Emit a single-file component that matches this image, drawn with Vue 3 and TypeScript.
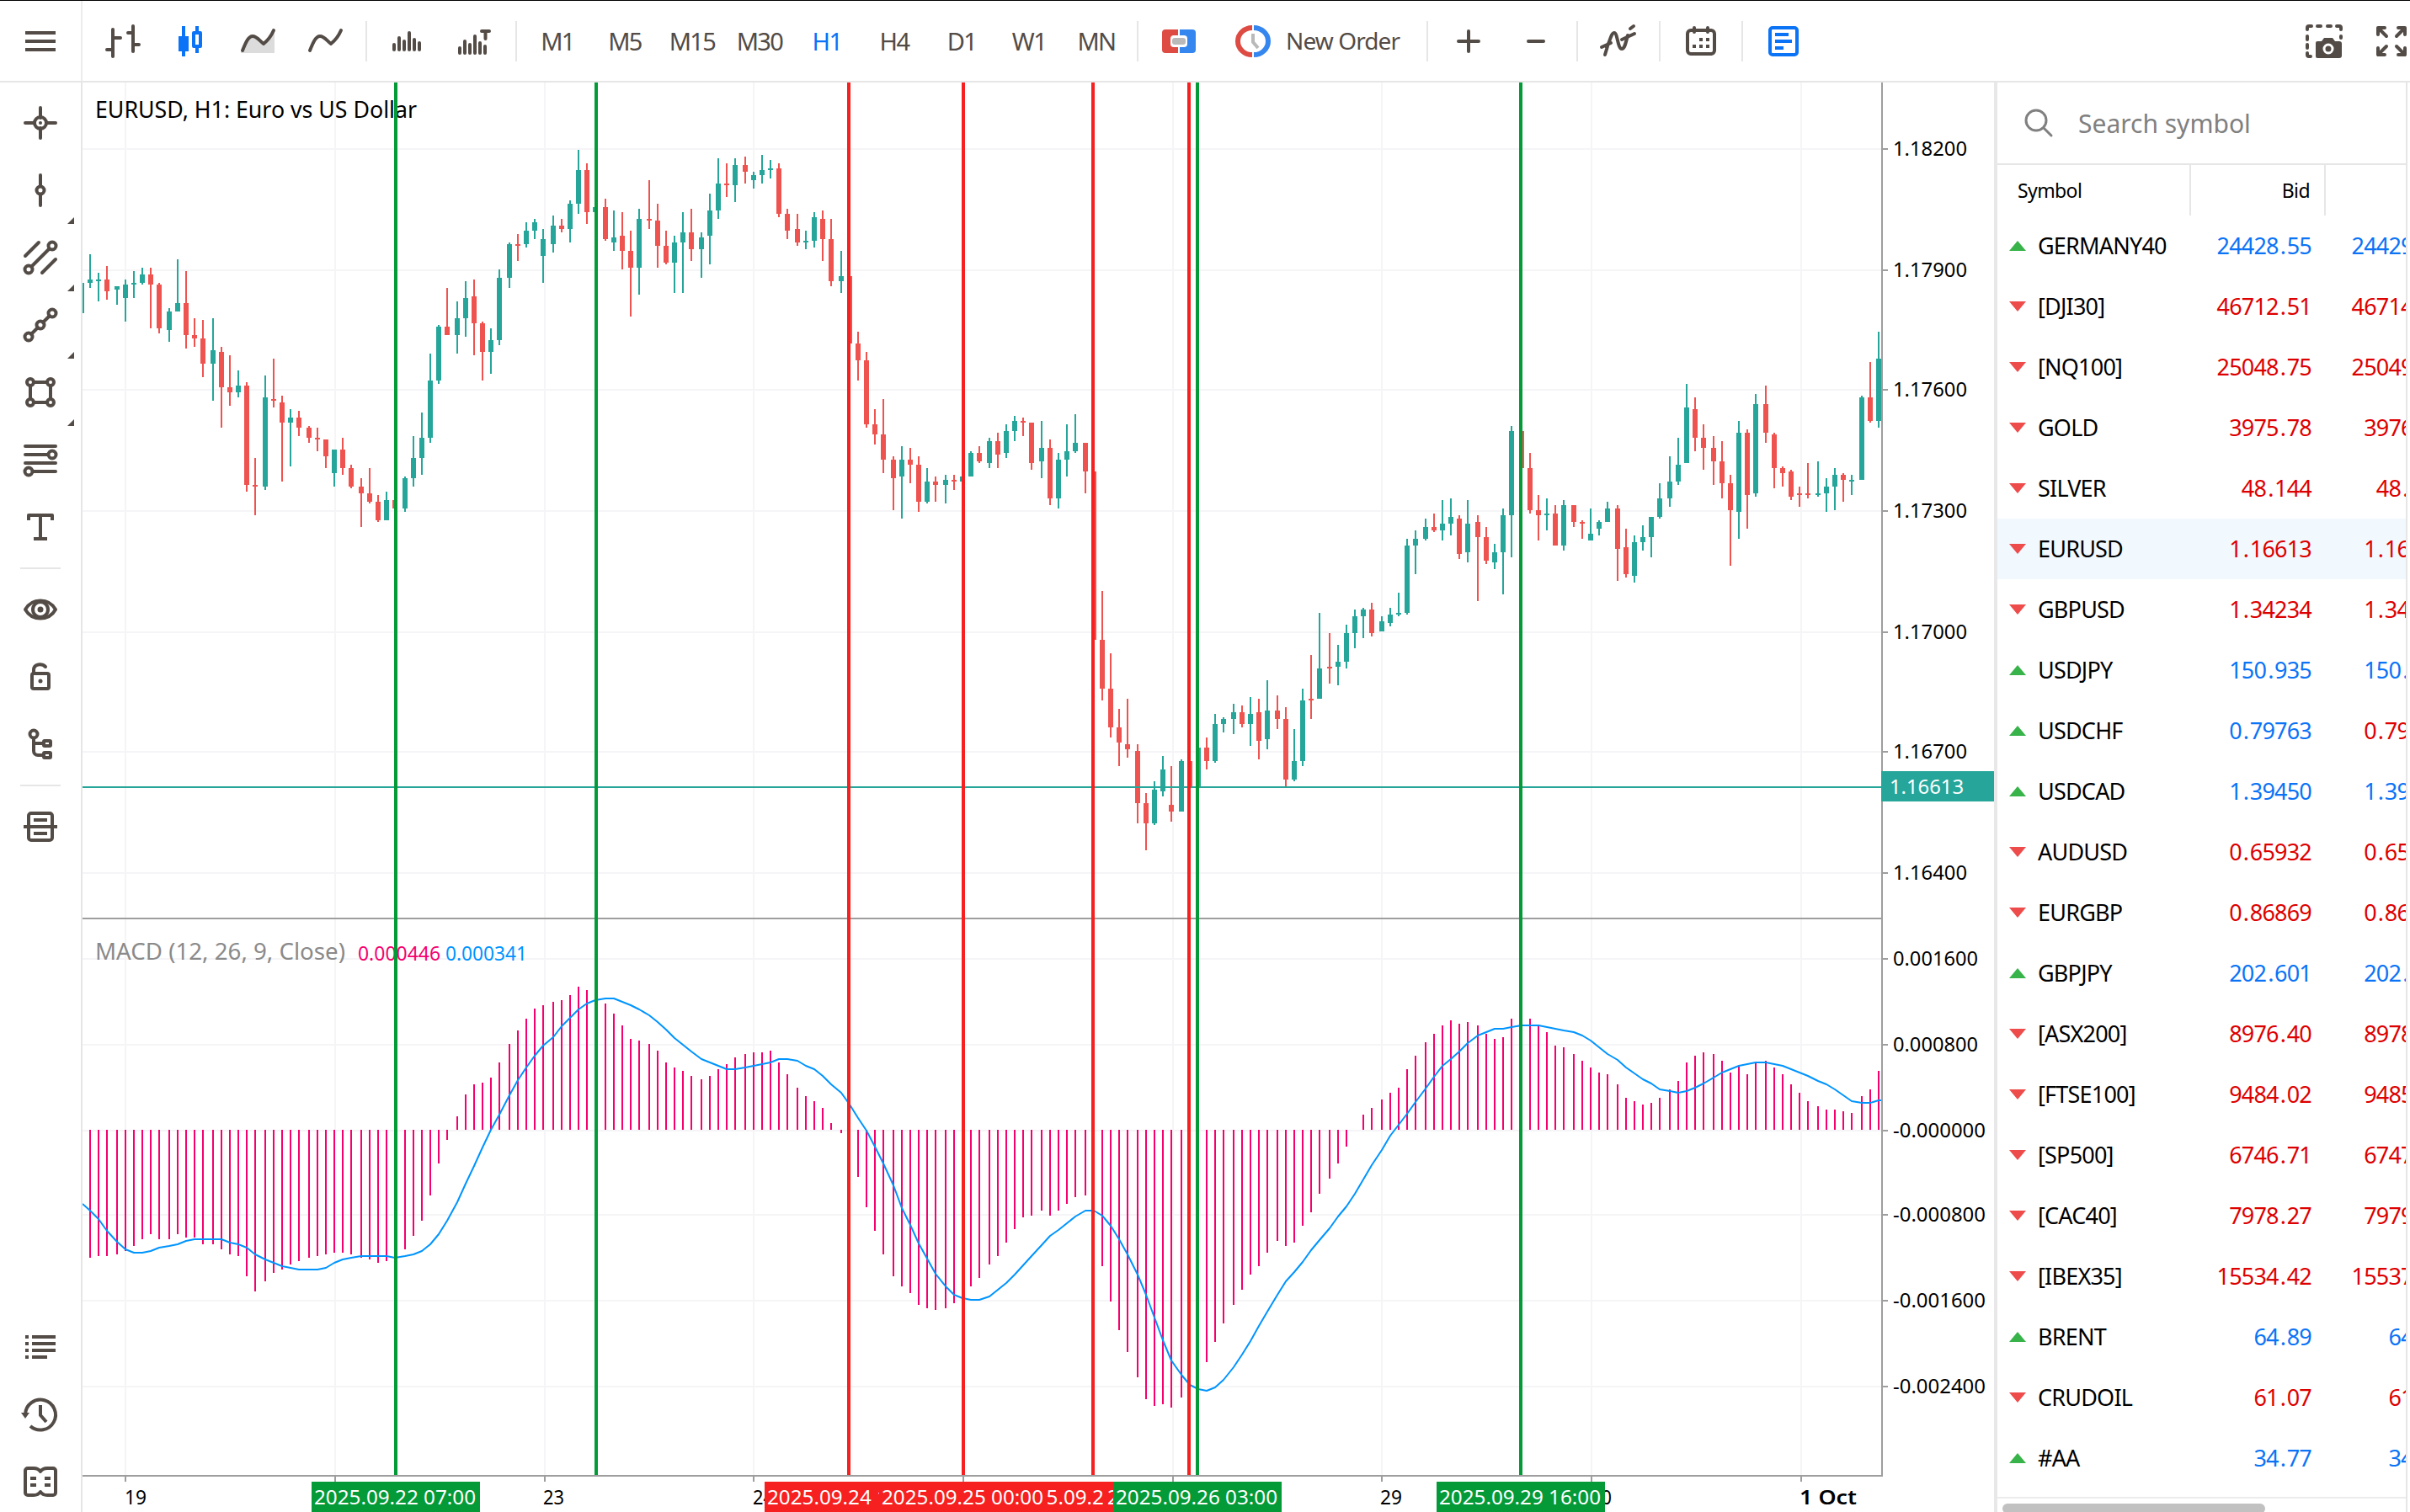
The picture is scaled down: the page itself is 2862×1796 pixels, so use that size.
<script setup lang="ts">
type Candle = [number, number, number, number, number]
type Dir = 'up' | 'down'
interface Quote { name: string; dir: Dir; bid: string; ask: string; bidUp: boolean; askUp: boolean; active?: boolean }

const icons: Record<string, string> = {
  menu: '<path d="M6 14h36M6 24h36M6 34h36" stroke-linecap="butt"/>',
  bars: '<path d="M12 10v32M5 34h7M12 20h9M36 6v30M30 14h6M36 28h7"/>',
  candles: '<path d="M16 6v36M32 6v6M32 32v6" stroke-linecap="butt"/><path d="M10 18h12v18H10z" fill="currentColor" stroke="none"/><path d="M28 14h8v16h-8z"/>',
  area: '<path d="M4 38V36C9 25 12 18 18 18s8 5 14 9c5-5 8-9 12-17v28z" fill="#dcdcdc" stroke="none"/><path d="M6 35C10 25 13 18 18 18s8 5 13 9c5-4 9-9 12-16"/>',
  line: '<path d="M6 35C10 25 13 18 18 18s8 5 13 9c5-4 9-9 12-16"/>',
  volume: '<path d="M8 28v6M14 20v14M20 24v10M26 14v20M32 22v12M38 26v8"/>',
  tick: '<path d="M6 32v6M12 24v14M18 28v10M24 18v20M30 26v12M36 30v8M32 12h9M36.500 12v9"/>',
  oneclick: '<g stroke="none"><path d="M23 10H8a4 4 0 0 0-4 4v20a4 4 0 0 0 4 4h15z" fill="#dd4b43"/><path d="M25 10h15a4 4 0 0 1 4 4v20a4 4 0 0 1-4 4H25z" fill="#3586ee"/><rect x="14" y="17" width="20" height="14" rx="4" fill="#fff"/><rect x="16" y="20" width="16" height="8" rx="3" fill="#b9b9b9"/></g>',
  order: '<g stroke-linecap="butt"><path d="M23 8a17 16 0 0 0 0 32" stroke="#dd4b43" stroke-width="6"/><path d="M25 8a17 16 0 0 1 0 32" stroke="#3586ee" stroke-width="6"/><path d="M24 15v10l6 7" stroke="#b9b9b9"/></g>',
  plus: '<path d="M24 12v24M12 24h24"/>',
  minus: '<path d="M15 24h18"/>',
  indicators: '<path d="M8 40l3-10M10 31c4-6 5-17 9-17s4 19 9 19c3 0 4-4 7-16M38 9l4-3"/><path d="M4 31l11-5M28 22l15-7"/>',
  calendar: '<rect x="8" y="11" width="32" height="28" rx="4"/><path d="M16 8v5M32 8v5" /><g stroke="none" fill="currentColor"><path d="M22 20h4v4h-4zM30 20h4v4h-4zM14 28h4v4h-4zM22 28h4v4h-4zM30 28h4v4h-4z"/></g>',
  doc: '<rect x="8" y="8" width="32" height="32" rx="3"/><path d="M14 16h16M14 24h20M14 32h10" stroke-linecap="butt"/>',
  camera: '<path d="M4 10V8a2 2 0 0 1 2-2h3M16 6h4M28 6h4M39 6h3a2 2 0 0 1 2 2v2M44 18v2M4 18v4M4 28v4M4 38v2a2 2 0 0 0 2 2h2"/><path fill="currentColor" stroke="none" d="M16 24h5l3-4h10l3 4h5a3 3 0 0 1 3 3v14a3 3 0 0 1-3 3H16a2 2 0 0 1-2-2V26a2 2 0 0 1 2-2z"/><circle cx="29" cy="33" r="5" stroke="#fff" stroke-width="3"/>',
  fullscreen: '<path d="M8 16V8h8M8 8l10 10M32 8h8v8M40 8L30 18M8 32v8h8M8 40l10-10M32 40h8v-8M40 40L30 30"/>',
  cross: '<path d="M24 6v12M24 30v12M6 24h11M31 24h11"/><circle cx="24" cy="24" r="7"/><circle cx="24" cy="24" r="2" fill="currentColor" stroke="none"/>',
  vline: '<path d="M24 6v13M24 29v13"/><circle cx="24" cy="24" r="4.500"/>',
  channel: '<path d="M6 22L22 6M14 34l20-20M26 42l16-16"/><circle cx="38" cy="10" r="4.500"/><circle cx="10" cy="38" r="4.500"/>',
  trend: '<path d="M13 35l8-8M27 21l8-8"/><circle cx="38" cy="10" r="4.500"/><circle cx="24" cy="24" r="4.500"/><circle cx="10" cy="38" r="4.500"/>',
  shape: '<path d="M17 12h14M17 36h14M12 17v14M36 17v14"/><circle cx="12" cy="12" r="4"/><circle cx="36" cy="12" r="4"/><circle cx="12" cy="36" r="4"/><circle cx="36" cy="36" r="4"/>',
  fibo: '<path d="M6 8h36M6 18h27M6 28h36M15 38h27"/><circle cx="38" cy="18" r="4.500"/><circle cx="10" cy="38" r="4.500"/>',
  text: '<path d="M10 16v-6h28v6M24 10v28M16 38h16" stroke-linecap="butt"/>',
  eye: '<path d="M6 24C14 10 34 10 42 24 34 38 14 38 6 24z"/><circle cx="24" cy="24" r="9"/><circle cx="24" cy="24" r="3.500" fill="currentColor" stroke="none"/>',
  lock: '<rect x="14" y="20" width="20" height="18" rx="2"/><path d="M16 20v-4c0-8 10-8 14-4"/><circle cx="24" cy="29" r="2.500" fill="currentColor" stroke="none"/>',
  tree: '<circle cx="16" cy="12" r="4.500"/><path d="M16 17v15a5 5 0 0 0 5 5h7M16 23h12"/><rect x="28" y="20" width="8" height="6" rx="1"/><rect x="28" y="34" width="8" height="6" rx="1"/>',
  objects: '<rect x="10" y="8" width="28" height="32" rx="3"/><path d="M4 24h40M16 16h16M16 32h16" stroke-linecap="butt"/>',
  list: '<path d="M6 12h4M14 12h28M6 20h4M14 20h28M6 28h4M14 28h28M6 36h4M14 36h18" stroke-linecap="butt"/>',
  history: '<path d="M6 24a18 18 0 1 1 6 14" stroke-linecap="butt"/><path d="M1 22h10l-5 7z" fill="currentColor" stroke="none"/><path d="M24 13v12l7 8" stroke-linecap="butt"/>',
  book: '<path d="M24 12c-2-3-4-4-8-4H9a3 3 0 0 0-3 3v26a3 3 0 0 0 3 3h7c4 0 6-1 8-4 2 3 4 4 8 4h7a3 3 0 0 0 3-3V11a3 3 0 0 0-3-3h-7c-4 0-6 1-8 4z"/><path d="M12 20h7M29 20h7M12 28h7M29 28h7" stroke-linecap="butt"/>',
  search: '<circle cx="21" cy="21" r="12"/><path d="M30 30l9 9"/>',
}

const frames = ['M1', 'M5', 'M15', 'M30', 'H1', 'H4', 'D1', 'W1', 'MN']
const drawTools = ['cross', 'vline', 'channel', 'trend', 'shape', 'fibo', 'text']
const expandable = ['vline', 'channel', 'trend', 'shape']

// high, body top, body bottom, low, rising
const candles: Candle[] = [
  [302,332,336,342,1],[324,332,334,358,1],[316,332,346,356,0],[340,340,344,362,1],[332,338,354,382,1],[322,336,338,354,1],[318,326,336,338,1],[318,326,338,390,0],[336,338,390,396,0],[366,370,392,406,1],
  [308,360,370,370,1],[322,360,398,414,0],[378,398,402,412,0],[380,402,432,448,0],[378,416,432,476,1],[412,418,460,508,0],[422,460,466,482,0],[440,458,466,472,1],[454,458,576,584,0],[544,576,578,612,0],
  [446,472,578,582,1],[426,474,476,484,0],[470,478,502,572,0],[486,496,502,554,1],[488,496,508,518,0],[506,508,520,526,0],[508,520,522,536,0],[522,522,542,556,0],[534,534,562,578,1],[520,534,556,564,0],
  [552,556,578,580,0],[568,578,586,626,0],[556,586,596,598,0],[588,596,618,620,0],[584,594,618,618,1],[594,594,604,604,0],[566,568,604,608,1],[518,544,568,578,1],[490,520,544,564,1],[420,452,520,526,1],
  [386,388,452,456,1],[342,388,398,398,0],[358,378,398,420,1],[334,354,378,400,1],[332,352,384,422,0],[382,384,418,452,0],[390,404,418,444,1],[320,330,404,410,1],[288,290,330,342,1],[278,290,292,310,0],
  [264,274,290,294,1],[260,264,274,284,1],[272,284,304,336,1],[256,268,290,300,1],[260,268,272,276,0],[238,242,272,288,1],[178,202,242,254,1],[194,202,252,266,0],[246,246,252,252,1],[236,246,284,286,0],
  [250,282,288,298,1],[252,280,298,320,0],[274,298,318,376,0],[248,260,318,350,1],[214,260,262,272,0],[242,262,292,318,0],[274,292,312,314,0],[280,288,312,348,1],[252,276,288,348,1],[248,276,296,310,0],
  [276,282,296,330,1],[230,250,280,314,1],[188,218,250,260,1],[194,218,220,234,0],[188,196,220,240,1],[186,196,204,218,0],[204,208,214,224,1],[184,202,208,218,1],[190,200,202,212,1],[194,200,254,258,0],
  [248,254,274,284,0],[254,272,288,292,0],[274,286,288,296,1],[252,258,286,294,1],[250,260,284,310,0],[260,284,334,340,0],[298,328,334,348,1],[328,328,408,408,0],[394,408,428,452,0],[418,428,504,508,0],
  [486,504,516,528,0],[474,516,546,562,0],[542,546,568,606,0],[530,546,566,616,1],[532,546,552,574,0],[542,552,596,608,0],[556,572,596,598,1],[566,572,576,596,0],[564,570,576,598,1],[564,570,572,582,0],
  [566,566,572,572,1],[536,538,566,566,1],[530,538,548,550,0],[520,524,550,556,1],[514,524,540,556,0],[504,512,538,544,1],[494,500,512,524,1],[496,500,502,518,0],[502,502,550,558,0],[500,532,548,568,1],
  [522,532,592,600,0],[538,546,592,604,1],[504,536,546,566,1],[492,526,536,538,1],[526,526,560,586,0],[560,560,760,760,0],[702,760,818,832,0],[776,818,864,876,0],[842,864,882,910,0],[830,884,890,900,0],
  [884,892,954,978,0],[942,954,978,1010,0],[928,938,978,980,1],[898,914,940,946,1],[910,956,964,976,0],[902,904,964,964,1],[904,904,936,936,0],[888,888,936,936,1],[876,888,904,914,0],[848,860,904,906,1],
  [852,854,860,870,1],[836,846,854,872,1],[838,846,860,864,0],[828,848,860,886,1],[830,846,880,902,0],[808,844,878,890,1],[826,844,854,866,0],[840,854,926,934,0],[866,904,926,928,1],[818,832,904,910,1],
  [778,830,832,854,0],[728,794,830,830,1],[752,792,794,812,0],[766,786,792,814,1],[742,752,786,794,1],[724,732,752,770,1],[722,724,732,758,1],[716,724,752,756,0],[732,738,750,750,1],[722,730,740,744,1],
  [704,728,730,732,1],[640,648,728,730,1],[630,640,648,682,1],[616,626,640,642,1],[610,626,630,632,0],[594,622,630,642,1],[592,614,622,636,1],[612,616,658,664,0],[594,622,656,668,1],[612,620,638,714,0],
  [626,638,666,670,0],[646,656,668,676,1],[604,612,656,706,1],[506,512,612,662,1],[512,512,556,556,0],[538,556,606,610,0],[588,606,612,642,0],[592,610,612,630,1],[600,610,648,648,0],[594,600,648,654,1],
  [600,600,620,626,0],[618,620,622,640,0],[604,634,642,642,1],[618,620,628,636,1],[596,604,620,620,1],[600,604,652,690,0],[628,650,682,686,0],[636,644,684,692,1],[624,638,644,654,1],[614,614,638,662,1],
  [574,592,614,616,1],[542,572,592,602,1],[520,552,572,576,1],[456,484,550,550,1],[472,486,520,536,0],[504,520,532,558,0],[518,532,548,576,0],[524,548,574,592,0],[564,574,606,672,0],[500,514,608,640,1],
  [510,514,588,628,0],[468,480,586,590,1],[458,480,514,526,0],[514,516,556,580,0],[554,556,562,578,0],[558,560,590,594,0],[578,586,588,602,0],[550,586,588,592,0],[548,586,588,590,1],[568,578,586,608,1],
  [556,564,578,606,1],[562,564,570,596,0],[564,570,572,588,1],[470,472,570,570,1],[430,472,500,502,0],[394,426,500,508,1],
]

const ZERO = 1342
const macd = [
  1494,1492,1492,1490,1486,1480,1472,1466,1472,1472,1466,1470,1470,1478,1478,1484,1490,1492,1516,1534,
  1522,1512,1508,1502,1498,1494,1492,1490,1488,1488,1490,1494,1496,1500,1498,1492,1484,1468,1450,1420,
  1382,1354,1326,1300,1288,1286,1280,1262,1240,1224,1210,1198,1194,1190,1188,1182,1172,1176,1184,1192,
  1204,1218,1234,1236,1240,1248,1262,1268,1272,1278,1282,1278,1270,1264,1256,1252,1250,1250,1248,1262,
  1276,1292,1302,1308,1316,1334,1346,1370,1398,1434,1462,1490,1516,1528,1536,1550,1554,1556,1554,1548,
  1540,1528,1518,1502,1492,1476,1460,1446,1444,1438,1444,1438,1430,1422,1420,1460,1504,1546,1580,1606,
  1636,1662,1670,1668,1672,1660,1650,1635,1618,1594,1572,1550,1532,1514,1504,1488,1474,1480,1476,1456,
  1440,1418,1400,1382,1362,1342,1324,1316,1306,1298,1292,1270,1254,1238,1228,1218,1212,1216,1214,1218,
  1228,1234,1232,1210,1210,1210,1218,1226,1242,1244,1252,1260,1268,1274,1276,1288,1304,1308,1312,1310,
  1304,1294,1284,1262,1254,1250,1252,1260,1274,1266,1276,1262,1260,1268,1276,1288,1298,1308,1314,1318,
  1318,1320,1322,1302,1294,1272,
]
const signal = [
  1438,1448,1462,1475,1484,1488,1488,1486,1482,1480,1478,1474,1472,1472,1472,1472,1476,1478,1482,1490,
  1496,1500,1504,1506,1508,1508,1508,1506,1500,1496,1494,1492,1492,1492,1492,1494,1492,1490,1486,1478,
  1466,1450,1428,1406,1385,1363,1342,1324,1301,1283,1268,1254,1242,1232,1219,1209,1199,1192,1188,1186,
  1186,1190,1194,1199,1206,1214,1223,1233,1241,1249,1258,1262,1266,1270,1270,1268,1266,1264,1262,1258,
  1258,1260,1266,1270,1278,1288,1298,1312,1328,1343,1362,1382,1408,1435,1455,1477,1495,1513,1528,1538,
  1542,1544,1544,1540,1532,1524,1514,1503,1492,1479,1468,1461,1453,1445,1438,1438,1444,1456,1472,1490,
  1514,1538,1565,1592,1616,1633,1645,1650,1652,1648,1639,1624,1609,1593,1575,1558,1538,1522,1511,1499,
  1485,1473,1459,1445,1433,1418,1401,1384,1366,1349,1336,1323,1309,1293,1279,1266,1258,1249,1239,1230,
  1226,1222,1222,1220,1218,1218,1218,1220,1222,1224,1226,1230,1236,1244,1252,1259,1268,1275,1282,1287,
  1294,1296,1298,1296,1292,1287,1280,1274,1270,1266,1264,1262,1262,1264,1266,1270,1274,1278,1284,1288,
  1294,1301,1308,1310,1310,1307,
]

// bars sit on a 10px pitch, with a 2px correction each time the fraction rolls over
const barX = (i: number): number => 107 + 10 * i + 2 * Math.floor(i * 0.18 + 0.53)

function candlePath(rising: number): string {
  return candles
    .map((c, i) => {
      if (c[4] !== rising) return ''
      const x = barX(i)
      return `M${x - 1} ${c[0]}h2V${c[3]}h-2zM${x - 3} ${c[1]}h6V${c[2]}h-6z`
    })
    .join('')
}
const upPath = candlePath(1) + 'M94 336h6V372h-6z'
const downPath = candlePath(0)
const macdPath = macd.map((y, i) => (y === ZERO ? '' : `M${barX(i)} ${ZERO}V${y}`)).join('')
const signalPath = 'M98 1430' + signal.map((y, i) => `L${barX(i)} ${y}`).join('') + 'L2234 1307'

const gridX = [149, 398, 647, 895, 1144, 1393, 1641, 1890, 2139]
const prices = [
  { y: 177, t: '1.18200' }, { y: 321, t: '1.17900' }, { y: 463, t: '1.17600' }, { y: 607, t: '1.17300' },
  { y: 751, t: '1.17000' }, { y: 893, t: '1.16700' }, { y: 1037, t: '1.16400' },
]
const levels = [
  { y: 1139, t: '0.001600' }, { y: 1241, t: '0.000800' }, { y: 1343, t: '-0.000000' },
  { y: 1443, t: '-0.000800' }, { y: 1545, t: '-0.001600' }, { y: 1647, t: '-0.002400' },
]
const days = [
  { x: 148, t: '19', w: 26 }, { x: 645, t: '23', w: 25 }, { x: 894, t: '24', w: 25 },
  { x: 1639, t: '29', w: 26 }, { x: 1889, t: '30', w: 25 },
]
const GREEN = '#049a38'
const RED = '#f5201f'
const markers = [
  { x: 470, c: GREEN, t: '2025.09.22 07:00' }, { x: 708, c: GREEN, t: '' }, { x: 1008, c: RED, t: '2025.09.24 11:00' },
  { x: 1144, c: RED, t: '2025.09.25 00:00' }, { x: 1298, c: RED, t: '2025.09.25 15:00' }, { x: 1412, c: RED, t: '2025.09.26 02:00' },
  { x: 1422, c: GREEN, t: '2025.09.26 03:00' }, { x: 1806, c: GREEN, t: '2025.09.29 16:00' },
]
// paint order of the date tags: earlier entries end up underneath
const tags = [2, 4, 3, 5, 6, 0, 7].map((i) => markers[i])

const q = (name: string, dir: Dir, bid: string, ask: string, bidUp = dir === 'up', askUp = bidUp): Quote => ({ name, dir, bid, ask, bidUp, askUp, active: name === 'EURUSD' })
const quotes: Quote[] = [
  q('GERMANY40', 'up', '24428.55', '24429.55'), q('[DJI30]', 'down', '46712.51', '46714.51'), q('[NQ100]', 'down', '25048.75', '25049.75'),
  q('GOLD', 'down', '3975.78', '3976.03'), q('SILVER', 'down', '48.144', '48.174'), q('EURUSD', 'down', '1.16613', '1.16619'),
  q('GBPUSD', 'down', '1.34234', '1.34243'), q('USDJPY', 'up', '150.935', '150.944'), q('USDCHF', 'up', '0.79763', '0.79774', true, false),
  q('USDCAD', 'up', '1.39450', '1.39460'), q('AUDUSD', 'down', '0.65932', '0.65940'), q('EURGBP', 'down', '0.86869', '0.86879'),
  q('GBPJPY', 'up', '202.601', '202.622'), q('[ASX200]', 'down', '8976.40', '8978.40'), q('[FTSE100]', 'down', '9484.02', '9485.02'),
  q('[SP500]', 'down', '6746.71', '6747.31'), q('[CAC40]', 'down', '7978.27', '7979.27'), q('[IBEX35]', 'down', '15534.42', '15537.42'),
  q('BRENT', 'up', '64.89', '64.92'), q('CRUDOIL', 'down', '61.07', '61.10'), q('#AA', 'up', '34.77', '34.80'),
]
const whole = (v: string): string => v.split('.')[0]
const frac = (v: string): string => v.split('.')[1]
</script>

<template>
  <div class="app">
    <header class="topbar">
      <div class="menu"><svg class="ico" viewBox="0 0 48 48" v-html="icons.menu" /></div>
      <div class="tools">
        <div class="cell"><svg class="ico" viewBox="0 0 48 48" v-html="icons.bars" /></div>
        <div class="cell on"><svg class="ico" viewBox="0 0 48 48" v-html="icons.candles" /></div>
        <div class="cell"><svg class="ico" viewBox="0 0 48 48" v-html="icons.area" /></div>
        <div class="cell"><svg class="ico" viewBox="0 0 48 48" v-html="icons.line" /></div>
        <i class="sep" />
        <div class="cell"><svg class="ico" viewBox="0 0 48 48" v-html="icons.volume" /></div>
        <div class="cell"><svg class="ico" viewBox="0 0 48 48" v-html="icons.tick" /></div>
        <i class="sep" />
        <div v-for="f in frames" :key="f" class="cell frame" :class="{ on: f === 'H1' }">{{ f }}</div>
        <i class="sep" />
        <div class="cell"><svg class="ico" viewBox="0 0 48 48" v-html="icons.oneclick" /></div>
        <div class="cell order"><svg class="ico" viewBox="0 0 48 48" v-html="icons.order" /><span>New Order</span></div>
        <i class="sep" />
        <div class="cell"><svg class="ico" viewBox="0 0 48 48" v-html="icons.plus" /></div>
        <div class="cell"><svg class="ico" viewBox="0 0 48 48" v-html="icons.minus" /></div>
        <i class="sep" />
        <div class="cell"><svg class="ico" viewBox="0 0 48 48" v-html="icons.indicators" /></div>
        <i class="sep" />
        <div class="cell"><svg class="ico" viewBox="0 0 48 48" v-html="icons.calendar" /></div>
        <i class="sep" />
        <div class="cell on"><svg class="ico" viewBox="0 0 48 48" v-html="icons.doc" /></div>
      </div>
      <div class="right">
        <div class="cell"><svg class="ico" viewBox="0 0 48 48" v-html="icons.camera" /></div>
        <div class="cell"><svg class="ico" viewBox="0 0 48 48" v-html="icons.fullscreen" /></div>
      </div>
    </header>

    <div class="body">
      <aside class="side">
        <div v-for="t in drawTools" :key="t" class="scell">
          <svg class="ico" viewBox="0 0 48 48" v-html="icons[t]" />
          <b v-if="expandable.includes(t)" class="more" />
        </div>
        <i class="hsep" />
        <div v-for="t in ['eye', 'lock', 'tree']" :key="t" class="scell"><svg class="ico" viewBox="0 0 48 48" v-html="icons[t]" /></div>
        <i class="hsep" />
        <div class="scell"><svg class="ico" viewBox="0 0 48 48" v-html="icons.objects" /></div>
        <div class="bottom">
          <div v-for="t in ['list', 'history', 'book']" :key="t" class="scell"><svg class="ico" viewBox="0 0 48 48" v-html="icons[t]" /></div>
        </div>
      </aside>

      <svg class="chart" viewBox="98 98 2270 1698" width="2270" height="1698">
        <clipPath id="plot"><rect x="98" y="98" width="2136" height="1656" /></clipPath>
        <g clip-path="url(#plot)">
          <g fill="#f5f5f7">
            <rect v-for="x in gridX" :key="x" :x="x - 1" y="98" width="2" height="1654" />
            <rect v-for="p in [...prices, ...levels]" :key="p.t" x="98" :y="p.y - 1" width="2136" height="2" />
          </g>
          <path :d="upPath" fill="#26a69a" />
          <path :d="downPath" fill="#ef5350" />
          <path :d="macdPath" stroke="#f5006e" stroke-width="2" fill="none" />
          <path :d="signalPath" stroke="#0094ff" stroke-width="2" fill="none" stroke-linejoin="round" />
        </g>
        <text x="113" y="140" font-size="27" textLength="382" lengthAdjust="spacingAndGlyphs">EURUSD, H1: Euro vs US Dollar</text>
        <text x="113" y="1140" font-size="28" textLength="297" lengthAdjust="spacingAndGlyphs" fill="#8a8a8a">MACD (12, 26, 9, Close)</text>
        <text x="425" y="1141" font-size="24" textLength="98" lengthAdjust="spacingAndGlyphs" fill="#f5006e">0.000446</text>
        <text x="529" y="1141" font-size="24" textLength="97" lengthAdjust="spacingAndGlyphs" fill="#0094ff">0.000341</text>
        <rect x="98" y="1090" width="2136" height="2" fill="#9e9e9e" />
        <rect x="98" y="1752" width="2138" height="2" fill="#9e9e9e" />
        <rect x="2234" y="98" width="2" height="1656" fill="#9e9e9e" />
        <rect x="98" y="934" width="2136" height="2" fill="#26a69a" />
        <rect v-for="m in markers" :key="m.x" :x="m.x - 2" y="98" width="4" height="1654" :fill="m.c" />
        <g v-for="p in prices" :key="p.t">
          <rect x="2236" :y="p.y - 1" width="6" height="2" fill="#9e9e9e" />
          <text x="2248" :y="p.y + 8" font-size="24" textLength="88" lengthAdjust="spacingAndGlyphs">{{ p.t }}</text>
        </g>
        <g v-for="p in levels" :key="p.t">
          <rect x="2236" :y="p.y - 1" width="6" height="2" fill="#9e9e9e" />
          <text x="2248" :y="p.y + 8" font-size="24" :textLength="p.t.length > 8 ? 110 : 101" lengthAdjust="spacingAndGlyphs">{{ p.t }}</text>
        </g>
        <rect x="2234" y="916" width="134" height="36" fill="#26a69a" />
        <text x="2244" y="943" font-size="24" textLength="88" lengthAdjust="spacingAndGlyphs" fill="#fff">1.16613</text>
        <rect v-for="x in gridX" :key="'t' + x" :x="x - 1" y="1754" width="2" height="6" fill="#9e9e9e" />
        <text v-for="d in days" :key="d.t" :x="d.x" y="1787" font-size="24" :textLength="d.w" lengthAdjust="spacingAndGlyphs">{{ d.t }}</text>
        <text x="2137" y="1787" font-size="24" font-weight="600" textLength="68" lengthAdjust="spacingAndGlyphs">1 Oct</text>
        <g v-for="m in tags" :key="m.x">
          <rect :x="m.x - 100" y="1760" width="200" height="36" :fill="m.c" />
          <text :x="m.x - 97" y="1787" font-size="24" textLength="192" lengthAdjust="spacingAndGlyphs" fill="#fff">{{ m.t }}</text>
        </g>
      </svg>

      <section class="panel">
        <div class="search"><svg class="ico" viewBox="0 0 48 48" v-html="icons.search" /><span>Search symbol</span></div>
        <div class="table">
          <div class="row head"><div class="name">Symbol</div><div class="num">Bid</div><div class="num" /></div>
          <div v-for="r in quotes" :key="r.name" class="row" :class="{ active: r.active }">
            <div class="name"><i :class="r.dir" /><span>{{ r.name }}</span></div>
            <div class="num" :class="r.bidUp ? 'blue' : 'red'">{{ whole(r.bid) }}<span class="dot">.</span>{{ frac(r.bid) }}</div>
            <div class="num" :class="r.askUp ? 'blue' : 'red'">{{ whole(r.ask) }}<span class="dot">.</span>{{ frac(r.ask) }}</div>
          </div>
        </div>
        <div class="scroll"><div class="thumb" /></div>
      </section>
      <div class="edge" />
    </div>
  </div>
</template>

<style>
body { margin: 0; background: #fff; overflow: hidden; }
</style>

<style scoped>
.app { width: 2862px; height: 1796px; overflow: hidden; display: flex; flex-direction: column; background: #fff; color: #000; font-family: "Noto Sans", "Open Sans", sans-serif; }
.topbar { box-sizing: border-box; height: 98px; flex: none; display: flex; border-top: 1px solid #000; border-bottom: 2px solid #e6e6e6; color: #534b46; }
.menu { box-sizing: border-box; width: 98px; flex: none; display: flex; align-items: center; justify-content: center; border-right: 2px solid #ececec; }
.tools { display: flex; align-items: center; padding-left: 8px; }
.right { display: flex; align-items: center; margin-left: auto; margin-right: -18px; }
.cell { width: 80px; height: 80px; flex: none; display: flex; align-items: center; justify-content: center; }
.on { color: #0b73f6; }
.frame { font-size: 29px; letter-spacing: -1.6px; }
.order { width: 246px; justify-content: flex-start; box-sizing: border-box; padding-left: 24px; gap: 15px; font-size: 28px; letter-spacing: -0.9px; white-space: nowrap; }
.order span { position: relative; top: -1px; }
.sep { width: 2px; height: 48px; margin: 0 8px; background: #e6e6e6; flex: none; }
.ico { width: 48px; height: 48px; flex: none; display: block; overflow: visible; fill: none; stroke: currentColor; stroke-width: 4; stroke-linecap: round; stroke-linejoin: round; }

.body { flex: 1; display: flex; min-height: 0; }
.side { box-sizing: border-box; width: 98px; flex: none; padding-top: 8px; display: flex; flex-direction: column; border-right: 2px solid #e6e6e6; color: #534b46; }
.scell { position: relative; width: 96px; height: 80px; flex: none; display: flex; align-items: center; justify-content: center; }
.more { position: absolute; right: 8px; bottom: 0; border-left: 8px solid transparent; border-bottom: 8px solid #534b46; }
.hsep { height: 2px; margin: 8px 24px; background: #e6e6e6; flex: none; }
.bottom { margin-top: auto; margin-bottom: -4px; }
.chart { flex: none; display: block; font-family: "Noto Sans", "Open Sans", sans-serif; }

.panel { box-sizing: border-box; width: 489px; flex: none; border-left: 4px solid #e8e8e8; display: flex; flex-direction: column; overflow: hidden; }
.search { box-sizing: border-box; height: 98px; flex: none; display: flex; align-items: center; gap: 23px; padding-left: 25px; border-bottom: 2px solid #e6e6e6; color: #808080; font-size: 30px; }
.search .ico { stroke-width: 3; }
.table { width: 550px; }
.row { height: 72px; display: flex; align-items: center; font-size: 27px; line-height: 36px; }
.active { background: #f1f8fe; }
.name { box-sizing: border-box; width: 230px; padding-left: 14px; display: flex; align-items: center; gap: 14px; letter-spacing: -0.8px; }
.num { box-sizing: border-box; width: 160px; padding-right: 17px; text-align: right; letter-spacing: -0.8px; }
.dot { margin: 0 1.5px 0 2px; }
.head { height: 60px; font-size: 23px; }
.head .name, .head .num { height: 60px; border-right: 2px solid #e6e6e6; padding-left: 24px; line-height: 60px; display: block; letter-spacing: -0.6px; }
.up, .down { width: 0; height: 0; border: 10px solid transparent; flex: none; }
.up { border-bottom: 12px solid #37b34a; border-top: 0; }
.down { border-top: 12px solid #ee4b4b; border-bottom: 0; }
.blue { color: #0b73f6; }
.red { color: #dd0000; }
.scroll { margin-top: 10px; flex: 1; border-top: 2px solid #ececec; padding: 6px 0 0 6px; }
.thumb { width: 312px; height: 12px; border-radius: 6px; background: #c1c1c1; }
.edge { width: 2px; background: #e6e6e6; }
</style>
